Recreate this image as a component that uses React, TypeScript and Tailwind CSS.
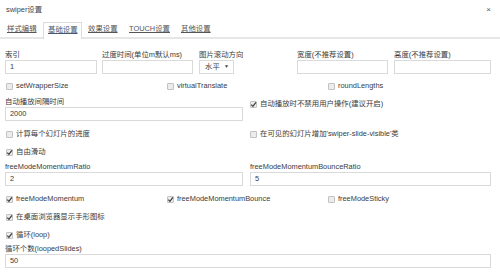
import React from "react";

const font = { fontFamily: '"Liberation Sans", "Noto Sans CJK SC", sans-serif' };

function Box({ checked }: { checked?: boolean }) {
  return (
    <span className="relative inline-block w-[7px] h-[7px] border border-[#c2c2c2] bg-[#ececec] rounded-[1px] shrink-0">
      {checked && (
        <svg viewBox="0 0 7 7" className="absolute left-[-1px] top-[-1px] w-[7px] h-[7px]">
          <path d="M1.3 3.7 L2.9 5.4 L5.9 1.3" stroke="#3a3a3a" strokeWidth="1.2" fill="none" />
        </svg>
      )}
    </span>
  );
}

function Check({ label, checked, className = "" }: { label: string; checked?: boolean; className?: string }) {
  return (
    <div className={`flex items-center gap-[3px] h-[12px] ${className}`}>
      <Box checked={checked} />
      <span className="leading-[12px] whitespace-nowrap">{label}</span>
    </div>
  );
}

function Input({ value = "", className = "" }: { value?: string; className?: string }) {
  return (
    <div className={`h-[14px] border border-[#dadada] bg-white pl-[4px] leading-[12px] ${className}`}>{value}</div>
  );
}

function Label({ s, h = 11 }: { s: string; h?: number }) {
  return (
    <div className={`${h === 10 ? "h-[10px] leading-[10px]" : "h-[11px] leading-[11px]"} whitespace-nowrap`}>{s}</div>
  );
}

export default function App() {
  return (
    <div className="w-[500px] h-[273px] bg-white text-[7.4px] text-[#3a3a3a] overflow-hidden" style={font}>
      <div className="h-[18px] flex items-center justify-between pl-[6px] pr-[9px] pt-[2px]">
        <span className="text-[#444]">swiper设置</span>
        <span className="text-[8px] text-[#555]">×</span>
      </div>
      <div className="h-[21px] border-b-2 border-[#e6e6e6] flex items-end">
        <div className="w-[43px] h-[16px] flex items-center pl-[7px]">
          <span className="underline text-[#555] whitespace-nowrap">样式编辑</span>
        </div>
        <div className="w-[39px] h-[17px] mb-[-2px] pb-[2px] border border-b-0 border-[#dcdcdc] bg-white flex items-center pl-[4px]">
          <span className="underline text-[#4a5670] whitespace-nowrap">基础设置</span>
        </div>
        <div className="w-[47px] h-[16px] flex items-center pl-[6px]">
          <span className="underline text-[#555] whitespace-nowrap">效果设置</span>
        </div>
        <div className="w-[52px] h-[16px] flex items-center">
          <span className="underline text-[#555] whitespace-nowrap">TOUCH设置</span>
        </div>
        <div className="h-[16px] flex items-center">
          <span className="underline text-[#555] whitespace-nowrap">其他设置</span>
        </div>
      </div>
      <div className="pl-[5px] pr-[9px] pt-[10px]">
        <div className="flex">
          <div className="w-[97px]">
            <Label s="索引" />
            <Input value="1" className="w-[92px]" />
          </div>
          <div className="w-[97px]">
            <Label s="过度时间(单位m默认ms)" />
            <Input className="w-[91px]" />
          </div>
          <div className="w-[98px]">
            <Label s="图片滚动方向" />
            <div className="w-[35px] h-[14px] border border-[#dadada] flex items-center justify-between pl-[5px] pr-[4px]">
              <span>水平</span>
              <span className="text-[5px]">▼</span>
            </div>
          </div>
          <div className="w-[97px]">
            <Label s="宽度(不推荐设置)" />
            <Input className="w-[91px]" />
          </div>
          <div className="flex-1">
            <Label s="高度(不推荐设置)" />
            <Input className="w-full" />
          </div>
        </div>

        <div className="flex mt-[6px] pl-[1px]">
          <Check label="setWrapperSize" className="w-[161px]" />
          <Check label="virtualTranslate" className="w-[161px]" />
          <Check label="roundLengths" />
        </div>

        <div className="flex mt-[5px]">
          <div className="w-[245px]">
            <Label s="自动播放间隔时间" h={10} />
            <Input value="2000" className="w-[238px]" />
          </div>
          <div className="flex-1 mt-[1px]">
            <Check label="自动播放时不禁用用户操作(建议开启)" checked />
          </div>
        </div>

        <div className="flex mt-[7px] pl-[1px]">
          <Check label="计算每个幻灯片的进度" className="w-[244px]" />
          <Check label="在可见的幻灯片增加'swiper-slide-visible'类" />
        </div>

        <Check label="自由滑动" checked className="mt-[6px] pl-[1px]" />

        <div className="flex mt-[3px]">
          <div className="w-[245px]">
            <Label s="freeModeMomentumRatio" />
            <Input value="2" className="w-[238px]" />
          </div>
          <div className="flex-1">
            <Label s="freeModeMomentumBounceRatio" />
            <Input value="5" className="w-full" />
          </div>
        </div>

        <div className="flex mt-[7px] pl-[1px]">
          <Check label="freeModeMomentum" checked className="w-[161px]" />
          <Check label="freeModeMomentumBounce" checked className="w-[161px]" />
          <Check label="freeModeSticky" />
        </div>

        <Check label="在桌面浏览器显示手形图标" checked className="mt-[6px] pl-[1px]" />
        <Check label="循环(loop)" checked className="mt-[6px] pl-[1px]" />

        <div className="mt-[2px]">
          <Label s="循环个数(loopedSlides)" />
          <Input value="50" className="w-full" />
        </div>
      </div>
    </div>
  );
}
